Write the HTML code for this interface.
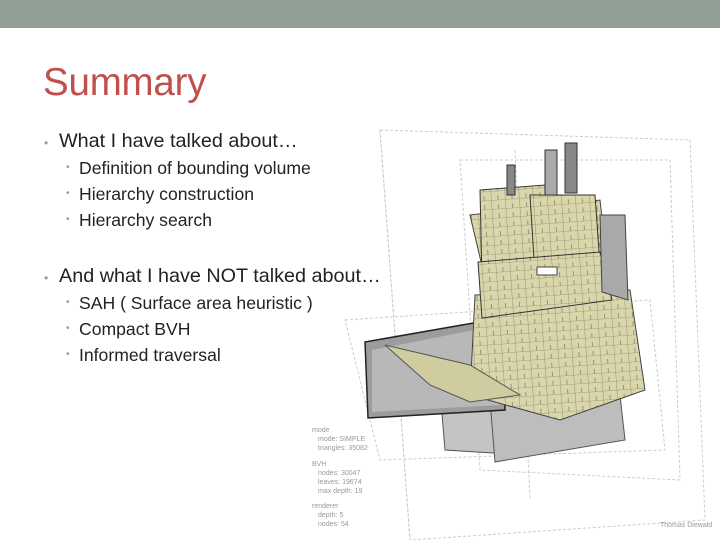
<!DOCTYPE html>
<html><head><meta charset="utf-8"><style>
body{margin:0;width:720px;height:540px;background:#fff;overflow:hidden;position:relative;font-family:"Liberation Sans",sans-serif;color:#222}
.bar{position:absolute;left:0;top:0;width:720px;height:28px;background:#919f97}
h1{position:absolute;left:43px;top:61px;margin:0;font-weight:normal;font-size:38.5px;color:#c0504d;letter-spacing:-0.2px}
.t{position:absolute;white-space:nowrap}
.l1{font-size:19.8px;left:59px}
.l2{font-size:17.6px;left:79px}
.b{position:absolute;color:#999;font-size:12px}
svg{position:absolute;left:0;top:0}
</style></head><body>
<div class="bar"></div>
<svg width="720" height="540">
<defs>
<pattern id="g" width="14" height="9" patternUnits="userSpaceOnUse" patternTransform="rotate(-4)">
<rect width="14" height="9" fill="#d9d6ac"/><path d="M0 0H14M0 0V9M7 4.5V9" stroke="#6d6b50" stroke-width="0.6" fill="none"/>
</pattern>
</defs>
<g fill="none" stroke="#ccc" stroke-width="1" stroke-dasharray="3 2">
<polygon points="380,130 690,140 705,520 410,540"/>
<polygon points="460,160 670,160 680,480 480,470"/>
<polygon points="345,320 650,300 665,450 380,460"/>
<line x1="380" y1="130" x2="410" y2="540"/>
<line x1="515" y1="150" x2="530" y2="500"/>
</g>
<polygon points="440,390 520,380 525,455 445,450" fill="#c4c4c4" stroke="#555"/>
<polygon points="490,400 620,395 625,440 495,462" fill="#bdbdbd" stroke="#555"/>
<polygon points="365,342 502,318 505,410 368,418" fill="#9c9c9c" stroke="#222" stroke-width="1.5"/>
<polygon points="372,350 500,325 500,405 372,412" fill="#b8b8b8"/>
<polygon points="475,295 630,290 645,390 560,420 470,395" fill="url(#g)" stroke="#444"/>
<polygon points="385,345 470,365 520,395 470,402 430,385" fill="#cfcca0" stroke="#555"/>
<polygon points="470,215 600,200 610,290 490,300" fill="url(#g)" stroke="#444"/>
<polygon points="480,190 545,185 548,270 482,280" fill="url(#g)" stroke="#333"/>
<polygon points="530,195 595,195 600,265 535,275" fill="url(#g)" stroke="#333"/>
<polygon points="478,262 600,252 612,300 482,318" fill="url(#g)" stroke="#333"/>
<polygon points="600,215 625,215 628,300 602,292" fill="#a9a9a9" stroke="#444"/>
<rect x="507" y="165" width="8" height="30" fill="#888" stroke="#333"/>
<rect x="545" y="150" width="12" height="45" fill="#aaa" stroke="#333"/>
<rect x="565" y="143" width="12" height="50" fill="#888" stroke="#333"/>
<rect x="537" y="267" width="20" height="8" fill="#fff" stroke="#444"/>
<g font-size="7" fill="#999" font-family="Liberation Sans,sans-serif">
<text x="312" y="432">mode</text><text x="318" y="441">mode: SIMPLE</text><text x="318" y="450">triangles: 35082</text>
<text x="312" y="466">BVH</text><text x="318" y="475">nodes: 30047</text><text x="318" y="484">leaves: 19674</text><text x="318" y="493">max depth: 19</text>
<text x="312" y="508">renderer</text><text x="318" y="517">depth: 5</text><text x="318" y="526">nodes: 54</text>
<text x="660" y="527">Thomas Diewald</text>
</g>
</svg>
<h1>Summary</h1>
<span class="b" style="left:44px;top:136px">•</span><div class="t l1" style="top:130px">What I have talked about…</div>
<span class="b" style="left:66px;top:162px;font-size:10px">•</span><div class="t l2" style="top:158px">Definition of bounding volume</div>
<span class="b" style="left:66px;top:188px;font-size:10px">•</span><div class="t l2" style="top:184px">Hierarchy construction</div>
<span class="b" style="left:66px;top:214px;font-size:10px">•</span><div class="t l2" style="top:210px">Hierarchy search</div>
<span class="b" style="left:44px;top:271px">•</span><div class="t l1" style="top:265px">And what I have NOT talked about…</div>
<span class="b" style="left:66px;top:297px;font-size:10px">•</span><div class="t l2" style="top:293px">SAH ( Surface area heuristic )</div>
<span class="b" style="left:66px;top:323px;font-size:10px">•</span><div class="t l2" style="top:319px">Compact BVH</div>
<span class="b" style="left:66px;top:349px;font-size:10px">•</span><div class="t l2" style="top:345px">Informed traversal</div>
</body></html>
